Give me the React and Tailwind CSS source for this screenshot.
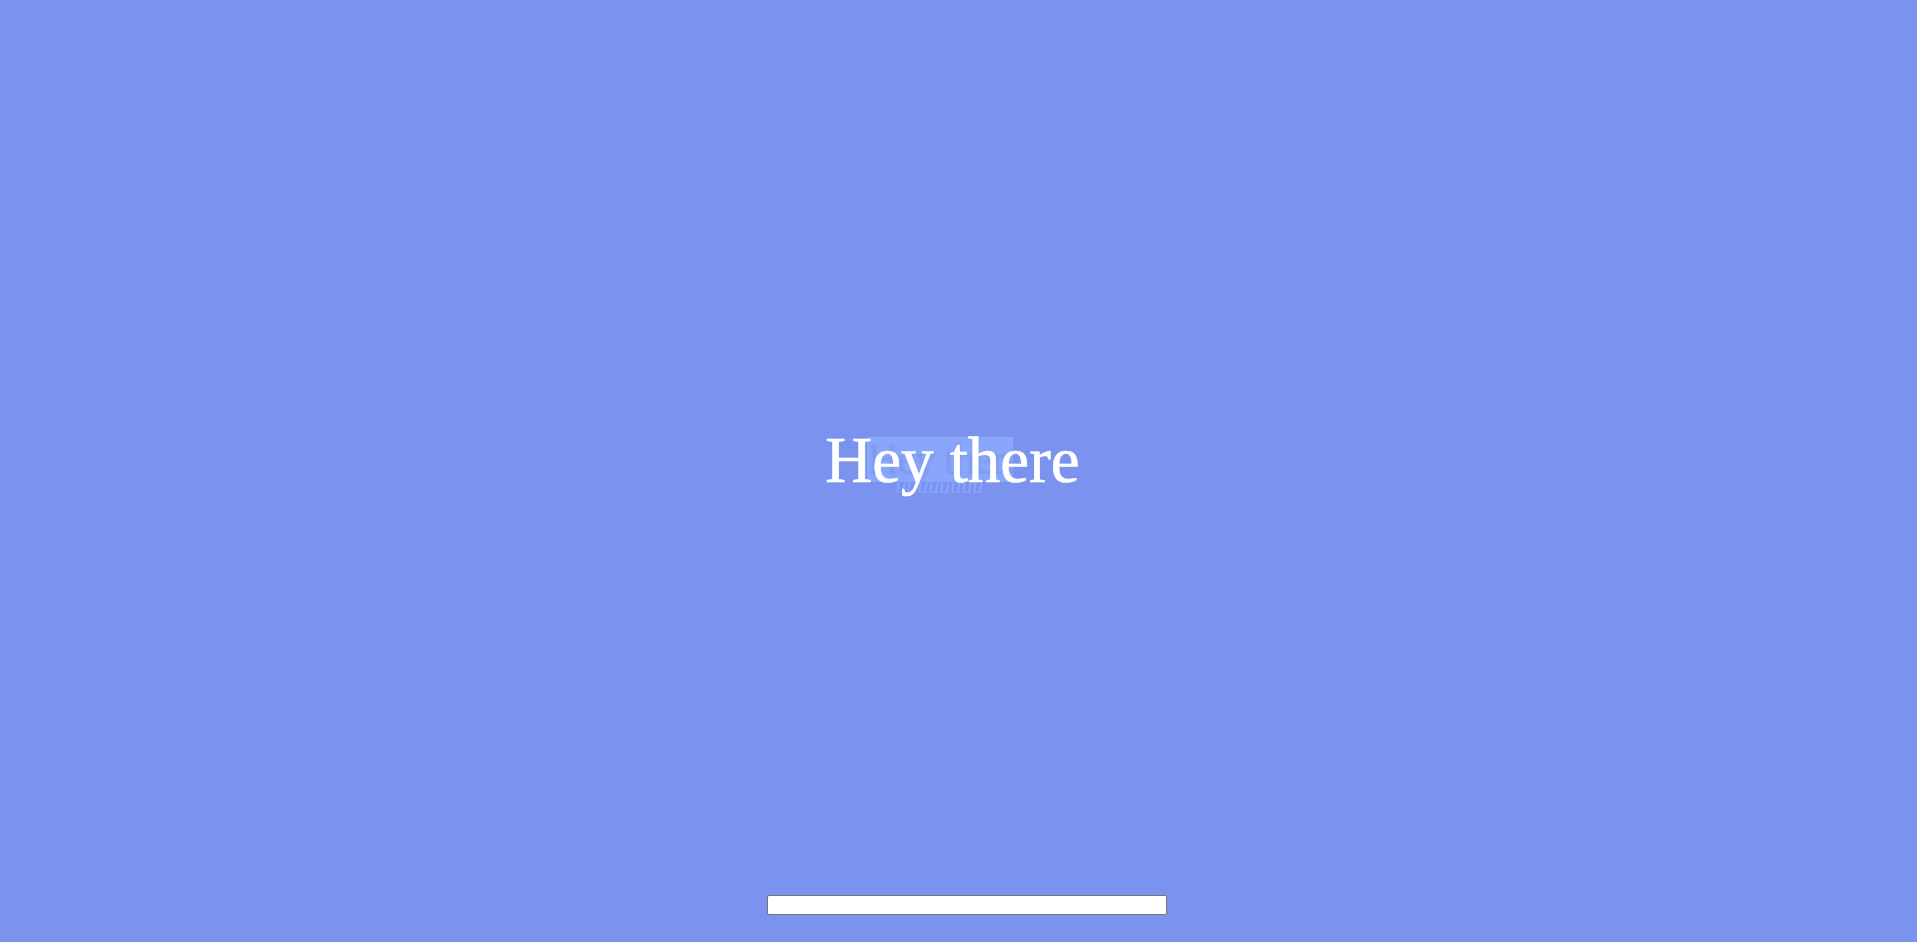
import React from 'react';

const serif = { fontFamily: '"Liberation Serif", "Times New Roman", serif' };

export default function App() {
  return (
    <div className="h-screen w-full bg-[#7b93ee] flex flex-col items-center overflow-hidden" style={serif}>
      {/* headline with the faded ghost copy behind it */}
      <div className="flex-1 flex items-start justify-center pt-[424px] pr-[12px]">
        <div className="relative">
          <div className="absolute left-[42px] top-[13px] w-[146px] h-[45px] bg-[#89a7fa] overflow-hidden">
            <span className="block text-[44px] leading-[45px] text-[#7d98ef] tracking-[-2px] blur-[1px] select-none whitespace-nowrap">
              Hey there
            </span>
          </div>
          <div className="absolute left-[70px] top-[50px] text-[22px] leading-[24px] italic text-[#89a7fa] whitespace-nowrap select-none">
            uuuuuuuu
          </div>
          <h1 className="relative text-[65px] leading-[72px] text-white font-normal whitespace-nowrap [-webkit-text-stroke:0.6px_white]">
            Hey there
          </h1>
        </div>
      </div>

      <div className="pb-[26px] pl-[17px]">
        <input
          type="text"
          className="w-[400px] h-[20px] bg-white border border-[#767676] rounded-[2px] px-1 text-[13px] outline-none"
        />
      </div>
    </div>
  );
}
